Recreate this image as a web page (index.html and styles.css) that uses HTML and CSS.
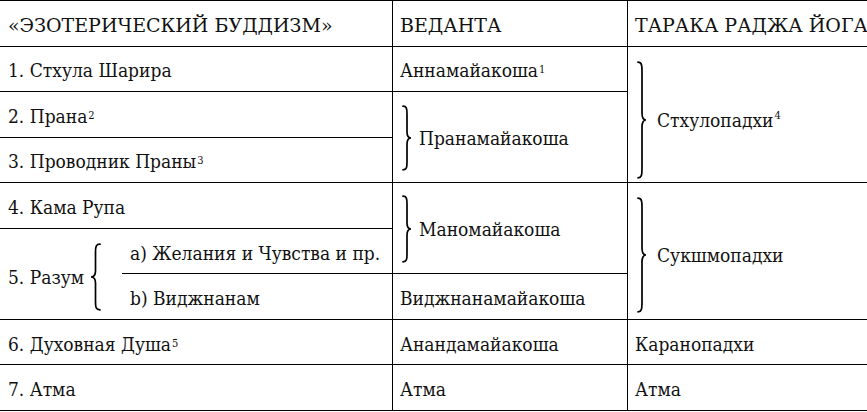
FILE: index.html
```html
<!DOCTYPE html>
<html lang="ru">
<head>
<meta charset="utf-8">
<title>Таблица</title>
<link rel="stylesheet" href="styles.css">
</head>
<body>
<div class="table">
  <div class="cell a r1 head">«ЭЗОТЕРИЧЕСКИЙ БУДДИЗМ»</div>
  <div class="cell b r1 head">ВЕДАНТА</div>
  <div class="cell c r1 head">ТАРАКА РАДЖА ЙОГА</div>

  <div class="cell a r2">1. Стхула Шарира</div>
  <div class="cell b r2">Аннамайакоша<sup class="fn">1</sup></div>
  <div class="cell c r2-4 shift-lg">
    <svg class="brace" width="10" height="118" viewBox="0 0 10 118"><path d="M1,1.2 C4.6,1.2 5,4 5,10 L5,52 C5,56.5 6.5,59 9,59 C6.5,59 5,61.5 5,66 L5,108 C5,114 4.6,116.8 1,116.8"/></svg>
    <span>Стхулопадхи<sup class="fn">4</sup></span>
  </div>

  <div class="cell a r3">2. Прана<sup class="fn">2</sup></div>
  <div class="cell b r3-4">
    <svg class="brace" width="10" height="66" viewBox="0 0 10 66"><path d="M1,1.2 C4.6,1.2 5,3.5 5,9 L5,27 C5,31 6.5,33 9,33 C6.5,33 5,35 5,39 L5,57 C5,62.5 4.6,64.8 1,64.8"/></svg>
    <span>Пранамайакоша</span>
  </div>

  <div class="cell a r4">3. Проводник Праны<sup class="fn">3</sup></div>

  <div class="cell a r5">4. Кама Рупа</div>
  <div class="cell b r5-6">
    <svg class="brace" width="10" height="68" viewBox="0 0 10 68"><path d="M1,1.2 C4.6,1.2 5,3.5 5,9 L5,28 C5,32 6.5,34 9,34 C6.5,34 5,36 5,40 L5,59 C5,64.5 4.6,66.8 1,66.8"/></svg>
    <span>Маномайакоша</span>
  </div>
  <div class="cell c r5-7 shift-md">
    <svg class="brace" width="10" height="116" viewBox="0 0 10 116"><path d="M1,1.2 C4.6,1.2 5,4 5,10 L5,51 C5,55.5 6.5,58 9,58 C6.5,58 5,60.5 5,65 L5,106 C5,112 4.6,114.8 1,114.8"/></svg>
    <span>Сукшмопадхи</span>
  </div>

  <div class="cell a1 r6-7">
    <span>5. Разум</span>
    <svg class="brace lbrace" width="12" height="68" viewBox="0 0 12 68"><path d="M11,1.2 C7,1.2 6.5,3.5 6.5,9 L6.5,28 C6.5,32 5,34 2,34 C5,34 6.5,36 6.5,40 L6.5,59 C6.5,64.5 7,66.8 11,66.8"/></svg>
  </div>
  <div class="cell a2 r6">a) Желания и Чувства и пр.</div>
  <div class="cell a2 r7">b) Виджнанам</div>
  <div class="cell b r7">Виджнанамайакоша</div>

  <div class="cell a r8">6. Духовная Душа<sup class="fn">5</sup></div>
  <div class="cell b r8">Анандамайакоша</div>
  <div class="cell c r8">Каранопадхи</div>

  <div class="cell a r9">7. Атма</div>
  <div class="cell b r9">Атма</div>
  <div class="cell c r9">Атма</div>
</div>
</body>
</html>
```

FILE: styles.css
```css
html, body {
  margin: 0;
  padding: 0;
  background: #fff;
}

body {
  font-family: "DejaVu Serif Condensed", "DejaVu Serif", serif;
  font-stretch: condensed;
  font-size: 19px;
  color: #111;
}

.table {
  width: 867px;
  height: 411px;
  box-sizing: border-box;
  border-top: 1px solid #000;
  display: grid;
  grid-template-columns: 122px 270px 235px 240px;
  grid-template-rows: repeat(9, 1fr);
}

.cell {
  box-sizing: border-box;
  border-bottom: 1px solid #000;
  display: flex;
  align-items: center;
  padding: 3px 0 0 8px;
  white-space: nowrap;
  min-width: 0;
}

.head {
  font-family: "DejaVu Serif", serif;
  font-stretch: normal;
  font-size: 19px;
}

.a { grid-column: 1 / 3; }
.a1 { grid-column: 1 / 2; }
.a2 { grid-column: 2 / 3; }
.b { grid-column: 3 / 4; border-left: 1px solid #000; padding-left: 7px; }
.c { grid-column: 4 / 5; border-left: 1px solid #000; padding-left: 7px; }

.r1 { grid-row: 1; }
.r2 { grid-row: 2; }
.r3 { grid-row: 3; }
.r4 { grid-row: 4; }
.r5 { grid-row: 5; }
.r6 { grid-row: 6; }
.r7 { grid-row: 7; }
.r8 { grid-row: 8; }
.r9 { grid-row: 9; }
.r2-4 { grid-row: 2 / 5; }
.r3-4 { grid-row: 3 / 5; }
.r5-6 { grid-row: 5 / 7; }
.r5-7 { grid-row: 5 / 8; }
.r6-7 { grid-row: 6 / 8; }

.b.r3-4, .b.r5-6 { padding-left: 9px; gap: 7px; padding-top: 2px; }
.c.r2-4, .c.r5-7 { padding-left: 9px; gap: 10px; }
.shift-lg { padding-top: 12px; }
.shift-md { padding-top: 8px; }

.a1 { gap: 5px; padding-top: 6px; }

.brace {
  flex: none;
  display: block;
}

.brace path {
  fill: none;
  stroke: #000;
  stroke-width: 1.7;
  stroke-linecap: round;
}

.fn {
  font-size: 11px;
  line-height: 0;
  vertical-align: 8px;
  margin-left: 1px;
}
```
